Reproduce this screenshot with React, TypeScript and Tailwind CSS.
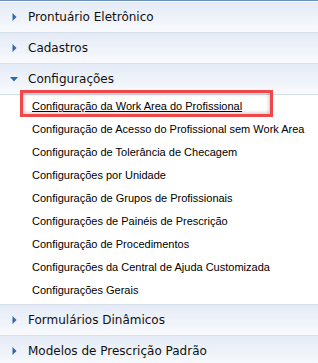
import React from "react";

const Arrow = ({ down }: { down?: boolean }) =>
  down ? (
    <svg width="8" height="5" viewBox="0 0 8 5" className="shrink-0">
      <path d="M0 0 L8 0 L4 4.5 Z" fill="#2f6aa3" />
    </svg>
  ) : (
    <svg width="5" height="8" viewBox="0 0 5 8" className="shrink-0">
      <path d="M0.5 0 L4.5 4 L0.5 8 Z" fill="#2f6aa3" />
    </svg>
  );

const Header = ({ label, open }: { label: string; open?: boolean }) => (
  <div className="h-[31px] flex items-center border-b border-[#d6dee9] bg-gradient-to-b from-[#e4ebf6] to-[#f8fafd]">
    <div className={open ? "w-[28px] pl-[10px] flex" : "w-[28px] pl-[12px] flex"}>
      <Arrow down={open} />
    </div>
    <span className="text-[12px] text-[#111]" style={{ fontFamily: "'DejaVu Sans', sans-serif" }}>
      {label}
    </span>
  </div>
);

const items = [
  "Configuração de Acesso do Profissional sem Work Area",
  "Configuração de Tolerância de Checagem",
  "Configurações por Unidade",
  "Configuração de Grupos de Profissionais",
  "Configurações de Painéis de Prescrição",
  "Configuração de Procedimentos",
  "Configurações da Central de Ajuda Customizada",
  "Configurações Gerais",
];

export default function App() {
  return (
    <div className="w-[318px] h-[363px] bg-white overflow-hidden" style={{ fontFamily: "'Liberation Sans', Arial, sans-serif" }}>
      <div className="h-[1px] bg-[#6b93bd]" />
      <div className="h-[1px] bg-white" />
      <Header label="Prontuário Eletrônico" />
      <Header label="Cadastros" />
      <Header label="Configurações" open />
      <div className="pb-[2px] bg-white border-b border-[#d6dee9]">
        <div className="relative h-[23px] flex items-center pl-[32px]">
          <div className="absolute left-[20px] top-[-5px] w-[253px] h-[27px] border-[3px] border-[#f04848] shadow-[inset_0_0_4px_rgba(0,0,0,0.35)]" />
          <span className="text-[11px] text-black underline">Configuração da Work Area do Profissional</span>
        </div>
        {items.map((t) => (
          <div key={t} className="h-[23px] flex items-center pl-[32px]">
            <span className="text-[11px] text-black">{t}</span>
          </div>
        ))}
      </div>
      <Header label="Formulários Dinâmicos" />
      <Header label="Modelos de Prescrição Padrão" />
    </div>
  );
}
